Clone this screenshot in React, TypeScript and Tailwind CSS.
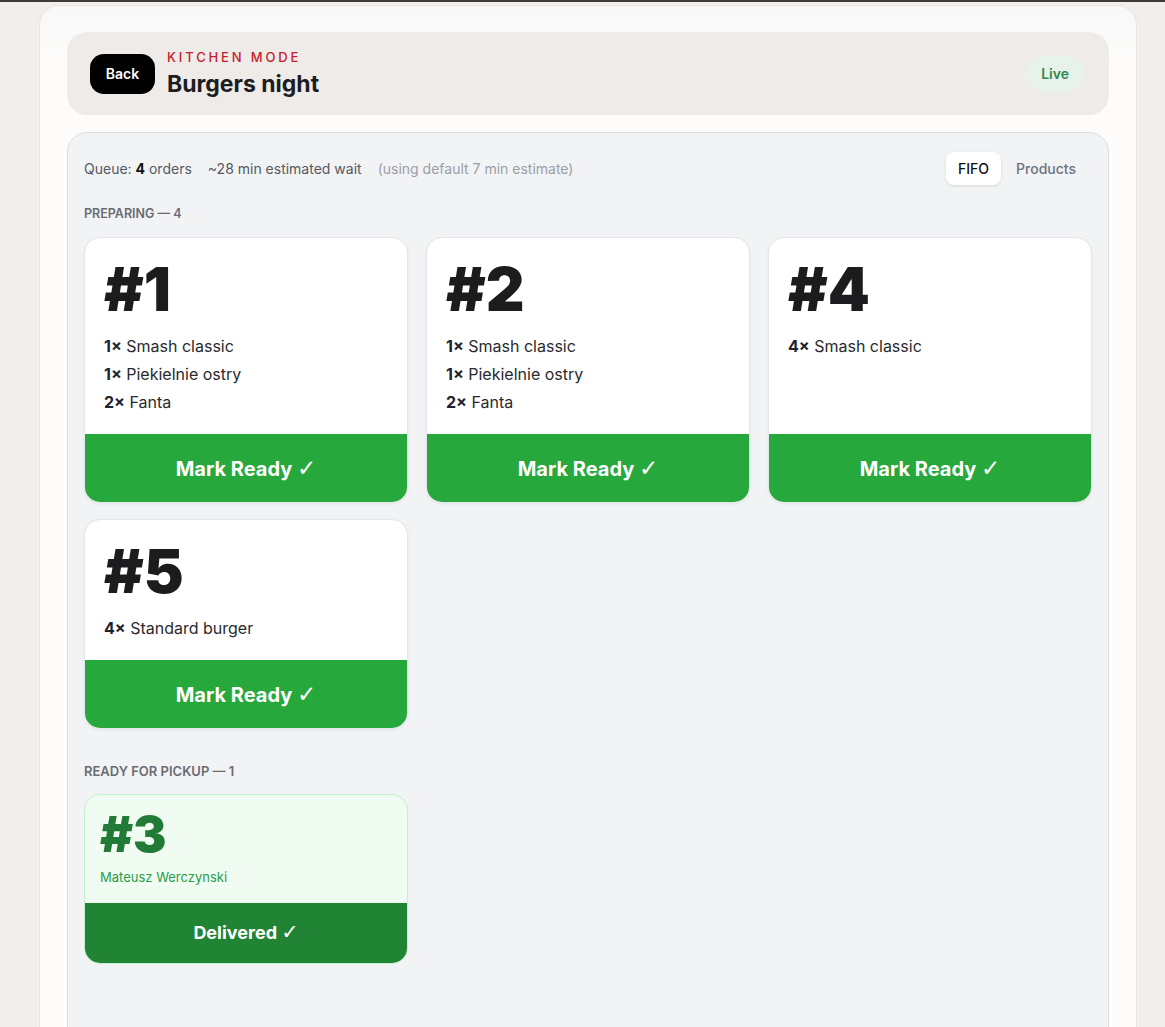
import React from "react";

interface OrderItem {
  qty: number;
  name: string;
}

interface Order {
  id: number;
  items: OrderItem[];
}

const preparing: Order[] = [
  {
    id: 1,
    items: [
      { qty: 1, name: "Smash classic" },
      { qty: 1, name: "Piekielnie ostry" },
      { qty: 2, name: "Fanta" },
    ],
  },
  {
    id: 2,
    items: [
      { qty: 1, name: "Smash classic" },
      { qty: 1, name: "Piekielnie ostry" },
      { qty: 2, name: "Fanta" },
    ],
  },
  { id: 4, items: [{ qty: 4, name: "Smash classic" }] },
  { id: 5, items: [{ qty: 4, name: "Standard burger" }] },
];

const ready = [{ id: 3, customer: "Mateusz Werczynski" }];

function Check() {
  return (
    <span className="font-bold text-[1.15em]" style={{ fontFamily: "'DejaVu Sans', sans-serif" }}>
      ✓
    </span>
  );
}

export default function App() {
  return (
    <div
      className="min-h-screen bg-[#f1eeeb] overflow-hidden"
      style={{ fontFamily: "Inter, 'Noto Sans', sans-serif" }}
    >
      <div className="h-[2px] bg-[#3d3a38]" />
      <div className="pl-[39px] pr-[28px] pt-[3px]">
        <div className="rounded-[20px] border border-[#e9e5e2] bg-gradient-to-b from-[#f8f8f8] to-[#fdfcfb] to-[60px] px-[27px] pt-[26px]">
          {/* Header */}
          <div className="h-[83px] rounded-[20px] bg-[#eeebe8] flex items-center justify-between pl-[23px] pr-[24px]">
            <div className="flex items-center gap-3">
              <button className="h-[40px] w-[65px] rounded-[14px] bg-black text-white text-[14px] font-semibold">
                Back
              </button>
              <div className="flex flex-col">
                <span className="text-[13px] font-medium tracking-[0.22em] text-[#c8202a] leading-[16px]">
                  KITCHEN MODE
                </span>
                <span className="mt-[5px] text-[23px] font-bold text-[#1d1d1f] leading-[28px]">
                  Burgers night
                </span>
              </div>
            </div>
            <span className="h-[36px] px-[16px] rounded-full bg-[#e8f2ec] text-[#2f8a4b] text-[14px] font-semibold flex items-center">
              Live
            </span>
          </div>

          {/* Board */}
          <div className="mt-[17px] min-h-[920px] rounded-[20px] border border-[#dcdde0] bg-[#f2f3f5] px-4 pt-[15px] pb-8">
            <div className="flex items-center justify-between">
              <div className="flex items-center text-[14px] text-[#555a61]">
                <span>
                  Queue: <b className="text-[#111] font-bold">4</b> orders
                </span>
                <span className="ml-4">~28 min estimated wait</span>
                <span className="ml-4 text-[14px] text-[#9a9ea6]">(using default 7 min estimate)</span>
              </div>
              <div className="flex items-center gap-[3px] p-1">
                <button className="h-[33px] px-3 rounded-lg bg-white shadow-[0_1px_3px_rgba(0,0,0,0.12)] text-[14px] font-medium text-[#111]">
                  FIFO
                </button>
                <button className="h-[33px] px-3 rounded-lg text-[14px] font-medium text-[#6b7280]">
                  Products
                </button>
              </div>
            </div>

            <div className="mt-[17px] mb-[15px] text-[12.5px] leading-[16px] font-semibold text-[#6b6b72]">
              PREPARING — {preparing.length}
            </div>
            <div className="grid grid-cols-3 gap-x-[18px] gap-y-[16px]">
              {preparing.map((o) => (
                <div
                  key={o.id}
                  className="flex flex-col rounded-[16px] border border-[#e4e6e9] bg-white overflow-hidden shadow-[0_1px_3px_rgba(0,0,0,0.06)]"
                >
                  <div className="flex-1 px-[19px] pt-[21px] pb-[18px]">
                    <div className="text-[60px] leading-none font-black tracking-normal text-[#1c1c1e]">
                      #{o.id}
                    </div>
                    <div className="mt-[13px]">
                      {o.items.map((it, i) => (
                        <div key={i} className="text-[16px] leading-[28px] text-[#2a2a2e]">
                          <span className="font-bold text-[#1e2330]">{it.qty}×</span> {it.name}
                        </div>
                      ))}
                    </div>
                  </div>
                  <button className="h-[68px] bg-[#26a83c] text-white text-[20px] font-bold">
                    Mark Ready <Check />
                  </button>
                </div>
              ))}
            </div>

            <div className="mt-[34px] mb-[15px] text-[13px] leading-[16px] font-semibold text-[#6b6b72]">
              READY FOR PICKUP — {ready.length}
            </div>
            <div className="grid grid-cols-3 gap-[18px]">
              {ready.map((o) => (
                <div
                  key={o.id}
                  className="flex flex-col rounded-[16px] border border-[#c2f0cd] bg-[#f0fbf2] overflow-hidden"
                >
                  <div className="px-[15px] pt-[14px] pb-4">
                    <div className="text-[50px] leading-none font-black tracking-normal text-[#217a35]">
                      #{o.id}
                    </div>
                    <div className="mt-2 text-[13px] leading-[20px] text-[#2a9d48]">{o.customer}</div>
                  </div>
                  <button className="h-[60px] bg-[#218334] text-white text-[18px] font-bold">
                    Delivered <Check />
                  </button>
                </div>
              ))}
            </div>
          </div>
        </div>
      </div>
    </div>
  );
}
